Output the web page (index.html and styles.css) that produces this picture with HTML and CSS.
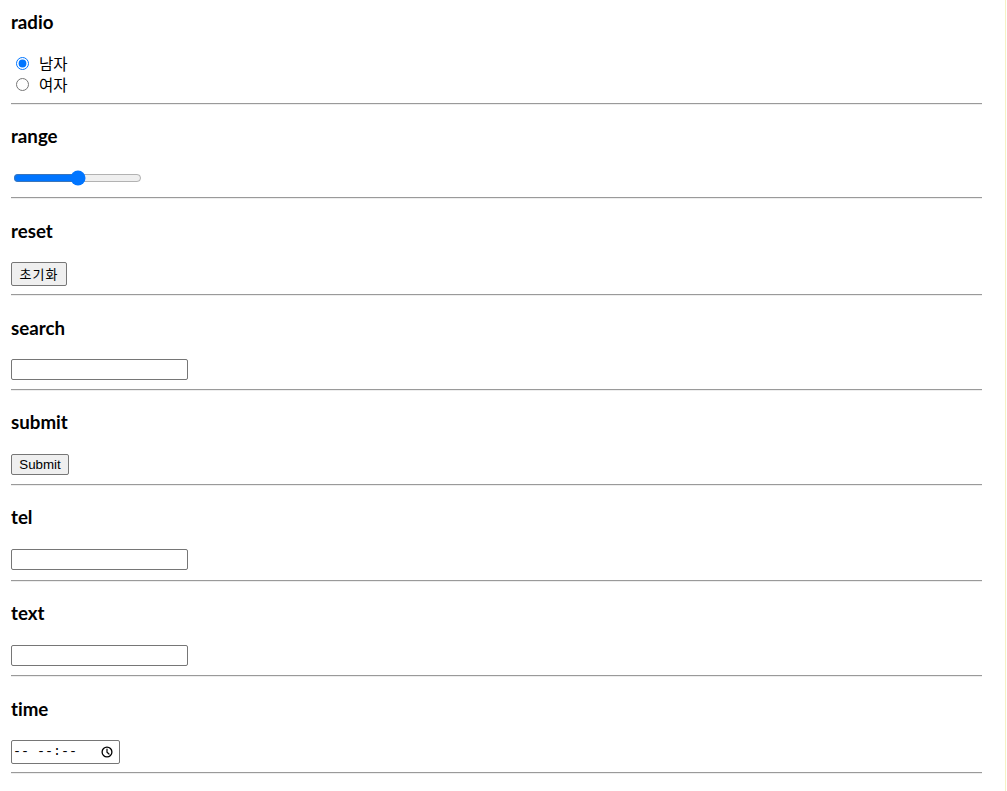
FILE: index.html
```html
<!DOCTYPE html>
<html lang="ko">
<head>
<meta charset="utf-8">
<title>input types</title>
<link rel="stylesheet" href="styles.css">
</head>
<body>
<main class="page">
  <section class="field">
    <h3 class="field-title">radio</h3>
    <div class="radio-group">
      <label class="radio-label"><input class="radio" type="radio" name="gender" checked>남자</label><br>
      <label class="radio-label"><input class="radio" type="radio" name="gender">여자</label>
    </div>
    <hr class="divider">
  </section>
  <section class="field">
    <h3 class="field-title">range</h3>
    <div class="line line-range"><input class="range" type="range"></div>
    <hr class="divider">
  </section>
  <section class="field">
    <h3 class="field-title">reset</h3>
    <div class="line line-reset"><button class="btn btn-reset" type="reset">초기화</button></div>
    <hr class="divider">
  </section>
  <section class="field">
    <h3 class="field-title">search</h3>
    <div class="line line-search"><input class="text-input" type="search"></div>
    <hr class="divider">
  </section>
  <section class="field">
    <h3 class="field-title">submit</h3>
    <div class="line line-submit"><button class="btn btn-submit" type="submit">Submit</button></div>
    <hr class="divider">
  </section>
  <section class="field">
    <h3 class="field-title">tel</h3>
    <div class="line line-tel"><input class="text-input" type="tel"></div>
    <hr class="divider">
  </section>
  <section class="field">
    <h3 class="field-title">text</h3>
    <div class="line line-text"><input class="text-input" type="text"></div>
    <hr class="divider">
  </section>
  <section class="field">
    <h3 class="field-title">time</h3>
    <div class="line line-time">
      <div class="time-input" role="textbox" aria-label="time">
        <span class="time-text">-- --:--</span>
        <svg class="clock" width="12" height="12" viewBox="0 0 12 12" aria-hidden="true">
          <circle cx="6" cy="6" r="4.9" fill="none" stroke="#000" stroke-width="1.3"/>
          <path d="M6 3.2V6.2L8 8" fill="none" stroke="#000" stroke-width="1.2" stroke-linecap="round"/>
        </svg>
      </div>
    </div>
    <hr class="divider">
  </section>
</main>
</body>
</html>
```
FILE: styles.css
```css
html {
  background: #fff;
}
body {
  margin: 0;
  width: 1005px;
  min-height: 100vh;
  border-right: 1px solid #f6f1c4;
  font-family: "Noto Sans", "Noto Sans CJK KR", sans-serif;
  font-size: 16px;
  line-height: 21px;
  color: #000;
}
.page {
  padding: 9px 0 0 11px;
  width: 971px;
}
.field-title {
  font-family: Lato, "Noto Sans", sans-serif;
  font-size: 18.72px;
  font-weight: bold;
  line-height: 25px;
  padding-top: 1px;
  margin: 18.72px 0 17.72px;
  font-variant-ligatures: none;
}
.field:first-child .field-title {
  margin-top: 0;
}
.radio-group {
  line-height: 21px;
  font-family: "Noto Sans CJK KR", sans-serif;
  font-size: 15.5px;
  font-weight: 400;
}
.radio {
  width: 13px;
  height: 13px;
  vertical-align: top;
  margin: 4px 10px 0 5px;
}
.divider {
  margin: 8px 0;
  border: 0;
  border-top: 1px solid #9a9a9a;
  border-bottom: 1px solid #eeeeee;
  height: 0;
}
.line {
  display: flex;
  align-items: center;
}
.line-range { height: 22px; }
.line-reset { height: 24.6px; }
.line-search { height: 22px; }
.line-submit { height: 22.5px; }
.line-tel { height: 23.5px; }
.line-text { height: 23px; }
.line-time { height: 25px; }
.range {
  margin: 2px;
  width: 129px;
}
.btn {
  font-family: "Liberation Sans", Arial, "Noto Sans CJK KR", sans-serif;
  font-size: 13.33px;
  margin: 0;
  padding: 1px 6px;
  border: 1px solid #767676;
  border-radius: 2px;
  background: #efefef;
  color: #000;
  box-sizing: border-box;
}
.btn-reset {
  width: 56px;
  height: 24px;
  font-family: "Noto Sans CJK KR", sans-serif;
  font-size: 13px;
  letter-spacing: 1px;
  padding: 0;
}
.btn-submit {
  width: 58px;
  height: 21px;
  padding: 0;
}
.text-input {
  box-sizing: border-box;
  width: 177px;
  height: 21px;
  margin: 0;
  padding: 1px 2px;
  border: 1px solid #767676;
  border-radius: 2px;
  background: #fff;
}
.time-input {
  box-sizing: border-box;
  width: 109px;
  height: 24px;
  padding: 0 6px 0 1px;
  border: 1px solid #767676;
  border-radius: 2px;
  background: #fff;
  display: flex;
  align-items: center;
  justify-content: space-between;
}
.time-text {
  font-family: "Liberation Mono", monospace;
  font-size: 13.33px;
  white-space: pre;
}
.clock {
  display: block;
}
```
